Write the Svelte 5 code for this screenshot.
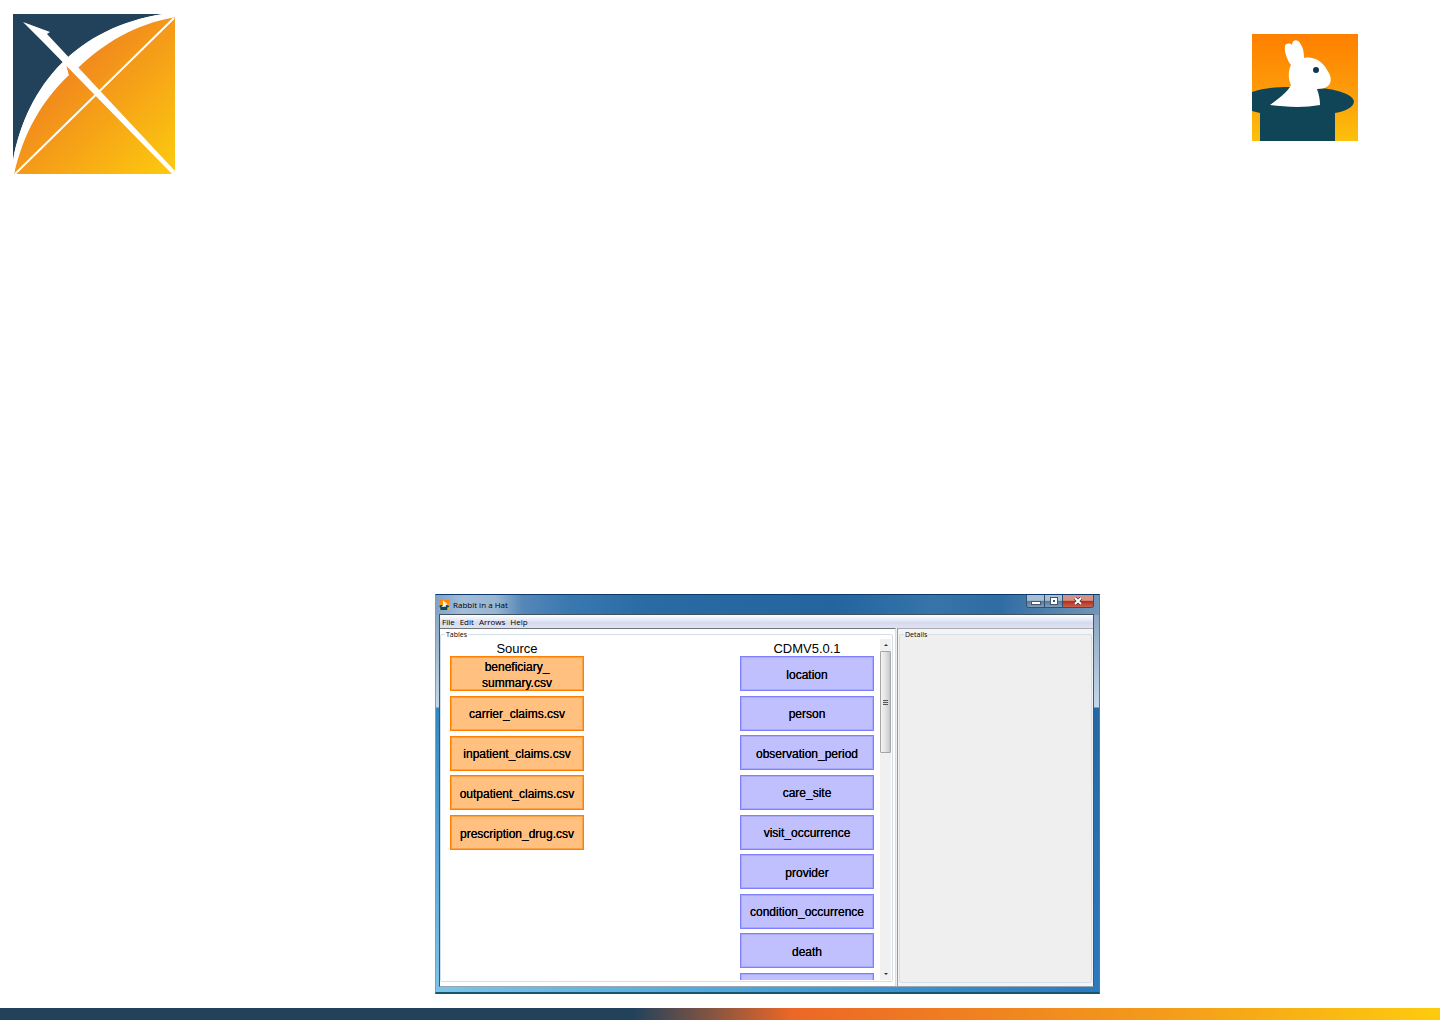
<script>
  const menus = ['File', 'Edit', 'Arrows', 'Help'];
  const sources = [
    'beneficiary_ summary.csv',
    'carrier_claims.csv',
    'inpatient_claims.csv',
    'outpatient_claims.csv',
    'prescription_drug.csv'
  ];
  const targets = [
    'location',
    'person',
    'observation_period',
    'care_site',
    'visit_occurrence',
    'provider',
    'condition_occurrence',
    'death'
  ];
</script>

{#snippet rabbit(cls)}
  <svg class={cls} viewBox="0 0 106 107" aria-hidden="true">
    <defs>
      <linearGradient id="sky-{cls}" x1="0" y1="0" x2="0" y2="1">
        <stop offset="0" stop-color="#ff7f00" />
        <stop offset="0.5" stop-color="#fd9a08" />
        <stop offset="1" stop-color="#fcc00c" />
      </linearGradient>
    </defs>
    <rect width="106" height="107" fill="url(#sky-{cls})" />
    <path
      d="M0 58 C12 54 24 53 38 53 L66 54 C86 55 101 61 102 67 C102 73 94 77 83 79 V107 H8 V79 L0 77 Z"
      fill="#0f4557"
    />
    <path
      d="M18 71 C27 64 36 58 39 51 C36 45 36 37 39 31 C35 26 32 17 33 12 C34 9 38 9 40 11 C40 5 46 5 48 9 C51 13 52 18 52 24 C62 22 71 28 75 36 C79 41 80 47 77 51 C74 54 70 55 65 55 C67 60 68 66 68 71 C52 74 34 73 18 71 Z"
      fill="#fff"
    />
    <circle cx="64" cy="36" r="3" fill="#0f3550" />
  </svg>
{/snippet}

<div class="page">
  <header>
    <svg class="bow" viewBox="0 0 162 160" role="img" aria-label="Bow and arrow logo">
      <defs>
        <linearGradient id="amber" gradientUnits="userSpaceOnUse" x1="50" y1="45" x2="162" y2="160">
          <stop offset="0" stop-color="#f0831e" />
          <stop offset="1" stop-color="#fdcb0e" />
        </linearGradient>
      </defs>
      <path d="M0 0 H150 C65 14 14 70 0 147 Z" fill="#22425b" />
      <path d="M162 3 C66 17 14 80 1 160 H162 Z" fill="url(#amber)" />
      <path d="M150 0 C65 13 14 70 0 147 V160 H1 C11 118 28 88 56 61 L53 49 L65 54 C90 30 120 11 162 3 V0 Z" fill="#fff" />
      <path d="M53 50 L65 53 L64 62 L56 61 Z" fill="url(#amber)" />
      <path d="M2 160 L161 4" stroke="#fff" stroke-width="2" />
      <path d="M10 8 L37 18 L34 20 L162 157 V160 H159 L31 29 Z" fill="#fff" />
    </svg>
    {@render rabbit('hat')}
  </header>

  <main>
    <section class="window" aria-label="Rabbit in a Hat">
      <div class="titlebar">
        {@render rabbit('app-icon')}
        <h1>Rabbit in a Hat</h1>
        <div class="controls">
          <button type="button" aria-label="Minimize">
            <svg viewBox="0 0 10 8"><rect x="0" y="4" width="10" height="4" fill="#44566a" /><rect x="1" y="5" width="8" height="2" fill="#fff" /></svg>
          </button>
          <button type="button" aria-label="Maximize">
            <svg viewBox="0 0 10 8"><rect x="1" width="8" height="8" fill="#44566a" /><rect x="2" y="1" width="6" height="6" fill="#fff" /><rect x="4" y="3" width="2" height="2" fill="#44566a" /></svg>
          </button>
          <button type="button" class="close" aria-label="Close">
            <svg viewBox="0 0 10 8"><path d="M2 1 L8 7 M8 1 L2 7" stroke="#54303a" stroke-width="3.500" /><path d="M2 1 L8 7 M8 1 L2 7" stroke="#fff" stroke-width="2" /></svg>
          </button>
        </div>
      </div>
      <div class="client">
        <nav aria-label="Menu">
          {#each menus as menu}
            <button type="button">{menu}</button>
          {/each}
        </nav>
        <div class="panes">
          <div class="pane left">
            <fieldset>
              <legend>Tables</legend>
              <div class="canvas">
                <div class="column">
                  <h2>Source</h2>
                  <div class="list sources">
                    {#each sources as name}
                      <button type="button" class="item source">{name}</button>
                    {/each}
                  </div>
                </div>
                <div class="column">
                  <h2>CDMV5.0.1</h2>
                  <div class="list targets">
                    {#each targets as name}
                      <button type="button" class="item target">{name}</button>
                    {/each}
                    <button type="button" class="item target" aria-label="Next table"></button>
                  </div>
                </div>
                <div class="scrollbar">
                  <button type="button" aria-label="Scroll up"><svg viewBox="0 0 6 4"><path d="M1 3 L3 1 L5 3 Z" fill="#333" /></svg></button>
                  <div class="thumb"><i></i></div>
                  <button type="button" class="down" aria-label="Scroll down"><svg viewBox="0 0 6 4"><path d="M1 1 L3 3 L5 1 Z" fill="#333" /></svg></button>
                </div>
              </div>
            </fieldset>
          </div>
          <div class="pane right">
            <fieldset>
              <legend>Details</legend>
            </fieldset>
          </div>
        </div>
      </div>
    </section>
  </main>

  <footer></footer>
</div>

<style>
  :global(body) {
    margin: 0;
    background: #fff;
  }

  .page {
    display: flex;
    flex-direction: column;
    min-height: 100vh;
    font-family: 'Liberation Sans', Arial, sans-serif;
    color: #000;
  }

  button {
    margin: 0;
    padding: 0;
    border: 0;
    background: none;
    font: inherit;
    color: inherit;
  }

  h1,
  h2 {
    margin: 0;
    font-weight: 400;
  }

  svg {
    display: block;
  }

  header {
    display: flex;
    justify-content: space-between;
    align-items: flex-start;
    padding: 14px 82px 0 13px;
  }

  .bow {
    width: 162px;
    height: 160px;
  }

  .hat {
    width: 106px;
    height: 107px;
    margin-top: 20px;
  }

  main {
    flex: 1;
    display: grid;
    grid-template-columns: 435fr 665fr 340fr;
    align-items: end;
    padding-bottom: 14px;
  }

  .window {
    grid-column: 2;
    display: flex;
    flex-direction: column;
    box-sizing: border-box;
    height: 400px;
    padding: 0 5px 5px 3px;
    border: 1px solid;
    border-bottom-width: 2px;
    border-color: #0c3a6c #5b7890 #17566f #6aa6cc;
    background:
      linear-gradient(90deg, #7fa3c8 0, #a3bdd8 4%, #98b5d2 9%, #5687b8 13%, #3a78b0 20%, #2a6ba4 32%, #2465a0 60%, #3674a9 75%, #2f6ca4 85%, #7396b8 100%) top / 100% 20px no-repeat,
      linear-gradient(90deg, #7cc4ea, #49a3d8 50%, #2a78bd) bottom / 100% 6px no-repeat,
      linear-gradient(#7f9dba 0, #c3d8ea 112px, #2468a4 113px, #2b7ac0 100%) right / 6px 100% no-repeat,
      linear-gradient(#7f9dba 0, #c3d8ea 112px, #3387c1 113px, #7cc4ea 100%);
  }

  .titlebar {
    display: flex;
    align-items: center;
    height: 19px;
  }

  .app-icon {
    width: 11px;
    height: 10px;
  }

  h1 {
    margin-left: 3px;
    font-family: 'Open Sans', sans-serif;
    font-size: 8px;
    line-height: 12px;
  }

  .controls {
    display: flex;
    align-self: flex-start;
    margin-left: auto;
    border: 1px solid #33506e;
    border-top: 0;
    border-radius: 0 0 3px 3px;
    overflow: hidden;
  }

  .controls button {
    display: grid;
    place-items: center;
    width: 18px;
    height: 12px;
    border-right: 1px solid #33506e;
    background: linear-gradient(#a9bfd5 0 45%, #58789b 50%, #7f9dbc);
  }

  .controls svg {
    width: 10px;
    height: 8px;
  }

  .controls .close {
    width: 30px;
    border: 0;
    background: linear-gradient(#d79084 0 45%, #b02c1b 50%, #c9604c);
  }

  .client {
    flex: 1;
    display: flex;
    flex-direction: column;
    min-height: 0;
    border: 1px solid #42525f;
    border-right-color: #2f5d86;
    border-bottom-color: #97a7b3;
    background: #f0f0f0;
  }

  nav {
    display: flex;
    gap: 5px;
    height: 13px;
    padding: 0 2px;
    background: linear-gradient(#fff, #e4e8f6 40%, #d5dbef 60%, #dfe3f3);
    font-family: 'Open Sans', sans-serif;
    font-size: 8px;
    line-height: 12px;
  }

  .panes {
    flex: 1;
    display: grid;
    grid-template-columns: 456fr 196fr;
    gap: 1px;
    min-height: 0;
  }

  .pane {
    display: grid;
    min-width: 0;
    border-top: 1px solid #6f7478;
  }

  .left {
    padding: 1px 2px 4px 0;
    border-right: 1px solid #d8dde2;
    background: #fff;
  }

  .right {
    padding: 1px 1px 3px 1px;
    border-top-color: #a8acb0;
    border-left: 1px solid #9a9a9a;
    background: #f4f4f4;
  }

  fieldset {
    min-width: 0;
    margin: 0;
    padding: 0;
    border: 1px solid #d3dfe8;
    border-radius: 2px;
  }

  .right fieldset {
    background: #efefef;
  }

  legend {
    margin-left: 4px;
    padding: 0 1px;
    font-family: 'Open Sans', sans-serif;
    font-size: 7px;
    line-height: 9px;
  }

  .canvas {
    display: flex;
    height: 341px;
    overflow: hidden;
    padding-left: 9px;
  }

  .column {
    width: 134px;
  }

  .column + .column {
    margin-left: auto;
  }

  h2 {
    padding-top: 3px;
    font-size: 13px;
    line-height: 14px;
    text-align: center;
  }

  .list {
    display: flex;
    flex-direction: column;
    justify-content: space-between;
  }

  .sources {
    height: 194px;
  }

  .targets {
    height: 352px;
  }

  .item {
    flex: none;
    width: 134px;
    height: 35px;
    padding-top: 2px;
    border: 1px solid #ff8000;
    background: #ffc080;
    box-shadow: inset 0 0 0 1px #ffa040;
    font-size: 12px;
    line-height: 16px;
    text-shadow: 0 0 0 #000;
  }

  .target {
    border-color: #8080ff;
    background: #c0c0ff;
    box-shadow: inset 0 0 0 1px #a8a8ff;
  }

  .scrollbar {
    display: flex;
    flex-direction: column;
    width: 11px;
    margin: 0 1px 0 6px;
    background: #f0f0f0;
  }

  .scrollbar button {
    display: grid;
    place-items: center;
    height: 12px;
  }

  .scrollbar svg {
    width: 6px;
    height: 4px;
  }

  .thumb {
    display: grid;
    place-items: center;
    box-sizing: border-box;
    height: 102px;
    border: 1px solid #a5a5a5;
    border-radius: 1px;
    background: linear-gradient(90deg, #f3f3f3, #e3e3e3 50%, #c6c6ca);
  }

  .thumb i {
    width: 5px;
    height: 5px;
    background: repeating-linear-gradient(#555 0 1px, #ddd 1px 2px);
  }

  .scrollbar .down {
    margin-top: auto;
  }

  footer {
    height: 12px;
    background: linear-gradient(90deg, #22425b 0 44%, #ec6726 55%, #f39a1b 80%, #fdcb0e 100%);
  }
</style>
